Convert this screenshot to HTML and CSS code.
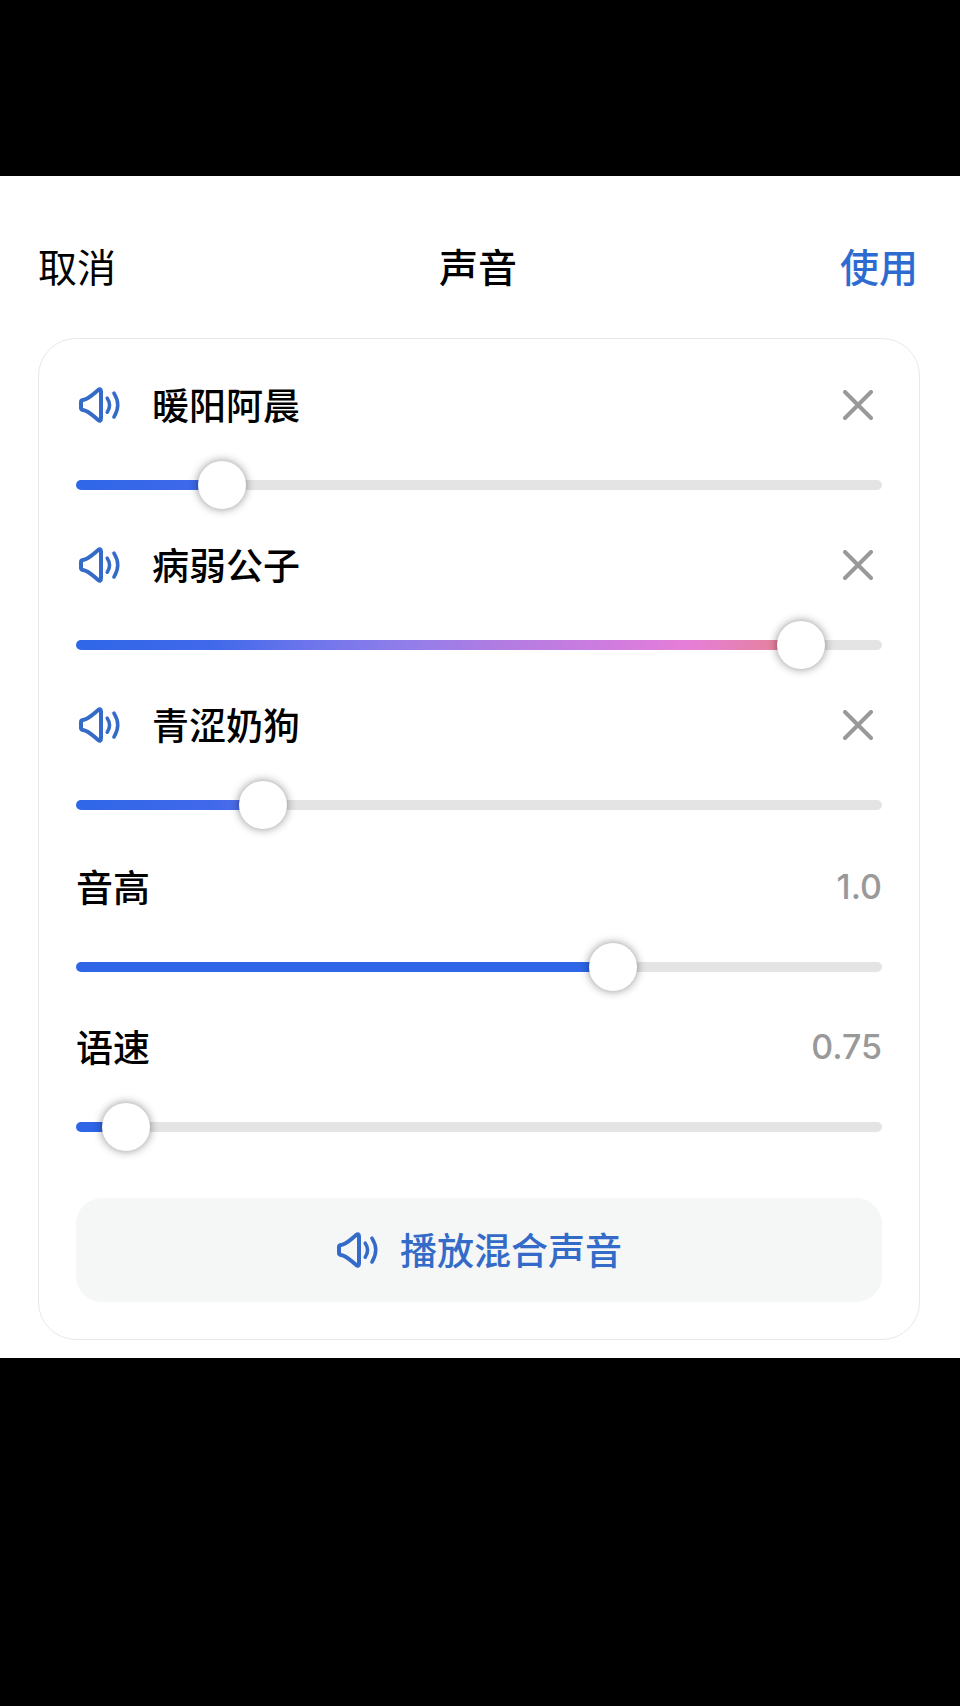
FILE: index.html
```html
<!DOCTYPE html>
<html lang="zh-CN">
<head>
<meta charset="utf-8">
<meta name="viewport" content="width=device-width, initial-scale=1">
<title>声音</title>
<link rel="stylesheet" href="styles.css">
</head>
<body>
<svg class="sprite" aria-hidden="true">
  <symbol id="speaker" viewBox="0 0 42 36">
    <path d="M5 13C10 12.400 13.500 8.500 20 3.200Q23 1 23 4.500V31.500Q23 35 20 32.800C13.500 27.500 10 23.600 5 23Q3 22.600 3 21V15Q3 13.400 5 13Z"/>
    <path stroke-width="3.500" d="M29.200 11.200Q34 18 29.200 25.200"/>
    <path stroke-width="3.500" d="M36 6.200Q43.500 18 36 30"/>
  </symbol>
  <symbol id="close" viewBox="0 0 30 30">
    <path d="M2 2L28 28M28 2L2 28"/>
  </symbol>
</svg>
<main class="sheet">
  <header class="bar">
    <button class="bar-button" type="button">取消</button>
    <h1 class="title">声音</h1>
    <button class="bar-button bar-button-primary" type="button">使用</button>
  </header>
  <section class="card">
    <div class="group">
      <div class="row">
        <div class="head">
          <svg class="speaker" aria-hidden="true"><use href="#speaker"/></svg>
          <label class="name" for="voice-1">暖阳阿晨</label>
          <button class="remove" type="button" aria-label="移除暖阳阿晨"><svg class="close" aria-hidden="true"><use href="#close"/></svg></button>
        </div>
        <input class="slider slider-voice" id="voice-1" type="range" min="0" max="1" step="any" value="0.161" style="--value: 0.161">
      </div>
      <div class="row">
        <div class="head">
          <svg class="speaker" aria-hidden="true"><use href="#speaker"/></svg>
          <label class="name" for="voice-2">病弱公子</label>
          <button class="remove" type="button" aria-label="移除病弱公子"><svg class="close" aria-hidden="true"><use href="#close"/></svg></button>
        </div>
        <input class="slider slider-voice" id="voice-2" type="range" min="0" max="1" step="any" value="0.925" style="--value: 0.925">
      </div>
      <div class="row">
        <div class="head">
          <svg class="speaker" aria-hidden="true"><use href="#speaker"/></svg>
          <label class="name" for="voice-3">青涩奶狗</label>
          <button class="remove" type="button" aria-label="移除青涩奶狗"><svg class="close" aria-hidden="true"><use href="#close"/></svg></button>
        </div>
        <input class="slider slider-voice" id="voice-3" type="range" min="0" max="1" step="any" value="0.215" style="--value: 0.215">
      </div>
    </div>
    <div class="group">
      <div class="row">
        <div class="head">
          <label class="name" for="pitch">音高</label>
          <output class="value" for="pitch">1.0</output>
        </div>
        <input class="slider" id="pitch" type="range" min="0" max="1" step="any" value="0.677" style="--value: 0.677">
      </div>
      <div class="row">
        <div class="head">
          <label class="name" for="speed">语速</label>
          <output class="value" for="speed">0.75</output>
        </div>
        <input class="slider" id="speed" type="range" min="0" max="1" step="any" value="0.034" style="--value: 0.034">
      </div>
    </div>
    <button class="play" type="button">
      <svg class="speaker" aria-hidden="true"><use href="#speaker"/></svg>
      <span class="play-label">播放混合声音</span>
    </button>
  </section>
</main>
</body>
</html>
```
FILE: styles.css
```css
* {
  box-sizing: border-box;
}

body {
  margin: 0;
  padding: 176px 0 0;
  background: #000;
  color: #000;
  font-family: Inter, "Noto Sans CJK SC", sans-serif;
  font-size: 37px;
  line-height: 48px;
}

button {
  margin: 0;
  padding: 0;
  border: 0;
  background: none;
  color: inherit;
  font: inherit;
  cursor: pointer;
}

.sprite {
  position: absolute;
  width: 0;
  height: 0;
}

.sheet {
  padding: 50px 40px 18px 38px;
  background: #fff;
}

.bar {
  display: grid;
  grid-template-columns: 1fr auto 1fr;
  align-items: center;
  height: 84px;
  margin-bottom: 28px;
  padding-right: 2px;
  font-size: 39px;
}

.bar-button {
  justify-self: start;
}

.bar-button-primary {
  justify-self: end;
  color: #2e6bd0;
  font-weight: 500;
}

.title {
  margin: 0;
  font-size: 39px;
  font-weight: 500;
}

.card {
  display: flex;
  flex-direction: column;
  padding: 26px 37px 37px;
  border: 1px solid #e8e8e8;
  border-radius: 38px;
}

.group + .group {
  margin-top: 2px;
}

.head {
  display: flex;
  align-items: center;
  height: 80px;
}

.name {
  flex: 1;
  padding-top: 3px;
  font-weight: 500;
}

.speaker {
  flex: none;
  width: 42px;
  height: 36px;
  fill: none;
  stroke: #346bc9;
  stroke-width: 4;
  stroke-linecap: round;
  stroke-linejoin: round;
}

.head .speaker {
  margin: 0 32px 0 2px;
}

.remove {
  display: flex;
  align-items: center;
  justify-content: center;
  width: 48px;
  height: 48px;
}

.close {
  width: 30px;
  height: 30px;
  fill: none;
  stroke: #999;
  stroke-width: 4;
  stroke-linecap: round;
}

.value {
  color: #999;
  font-size: 34px;
  font-weight: 500;
}

.slider {
  --fill: linear-gradient(#2f66e8, #2f66e8);
  --edge: calc(24px + (100% - 48px) * var(--value));
  display: block;
  width: 100%;
  height: 48px;
  margin: 16px 0;
  background: none;
  appearance: none;
}

.slider-voice {
  --fill: linear-gradient(90deg, #2f66e8 0%, #4069ea 17%, #6a74ec 28%, #917eea 41%, #b27ce2 53%, #cf7cdf 66%, #e67ed8 76%, #e5829e 87%);
}

.slider::-webkit-slider-runnable-track {
  height: 10px;
  border-radius: 5px;
  background: linear-gradient(90deg, transparent var(--edge), #e4e4e4 var(--edge)), var(--fill);
}

.slider::-webkit-slider-thumb {
  width: 48px;
  height: 48px;
  margin-top: -19px;
  border-radius: 50%;
  background: #fff;
  box-shadow: 0 0 10px rgba(0, 0, 0, 0.45);
  appearance: none;
}

.play {
  display: flex;
  align-items: center;
  justify-content: center;
  gap: 22px;
  height: 104px;
  margin-top: 31px;
  border-radius: 26px;
  background: #f5f7f7;
  color: #346bc9;
}

.play-label {
  padding-top: 3px;
  font-weight: 500;
}
```
